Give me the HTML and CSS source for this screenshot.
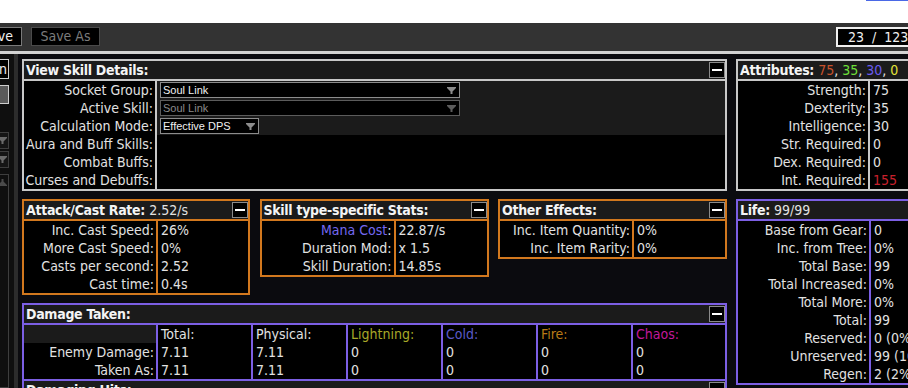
FILE: index.html
```html
<!DOCTYPE html>
<html>
<head>
    <title>Path of Building - Calcs</title>
    <link rel="stylesheet" href="styles.css">
</head>
<body>
    <div class="top-strip"><div class="focus-edge"></div></div>

    <!-- ツールバー -->
    <div class="toolbar">
        <button class="tb-btn tb-save">Save</button>
        <button class="tb-btn" disabled>Save As</button>
        <div class="counter">23  /  123</div>
    </div>

    <div class="workspace">
        <!-- 左サイドバー (切れている部分) -->
        <div class="sidebar">
            <button class="side-btn">Option</button>
            <div class="side-swatch"></div>
            <div class="side-select first">
                <svg width="9" height="7" viewBox="0 0 9 7"><polygon points="0,0 9,0 9,1 5.5,4.5 5.5,7 3.5,7 3.5,4.5 0,1" fill="#6a6a6a"/></svg>
            </div>
            <div class="side-select">
                <svg width="9" height="7" viewBox="0 0 9 7"><polygon points="0,0 9,0 9,1 5.5,4.5 5.5,7 3.5,7 3.5,4.5 0,1" fill="#6a6a6a"/></svg>
            </div>
            <div class="side-scroll">
                <svg width="9" height="7" viewBox="0 0 9 7"><polygon points="0,7 9,7 9,6 5.5,2.5 5.5,0 3.5,0 3.5,2.5 0,6" fill="#4a4a4a"/></svg>
            </div>
        </div>
        <div class="divider"></div>

        <div class="calcs">
            <div class="col-left">
                <!-- スキル詳細 -->
                <section class="panel grey">
                    <header class="panel-head">
                        <span class="title">View Skill Details:</span>
                        <span class="min-btn"></span>
                    </header>
                    <div class="grid lw131">
                        <div class="lbl">Socket Group:</div>
                        <div class="val shade">
                            <div class="dropdown wide">
                                <span>Soul Link</span>
                                <svg width="9" height="7" viewBox="0 0 9 7"><polygon points="0,0 9,0 9,1 5.5,4.5 5.5,7 3.5,7 3.5,4.5 0,1" fill="#8c8c8c"/></svg>
                            </div>
                        </div>
                        <div class="lbl">Active Skill:</div>
                        <div class="val shade">
                            <div class="dropdown wide disabled">
                                <span>Soul Link</span>
                                <svg width="9" height="7" viewBox="0 0 9 7"><polygon points="0,0 9,0 9,1 5.5,4.5 5.5,7 3.5,7 3.5,4.5 0,1" fill="#5c5c5c"/></svg>
                            </div>
                        </div>
                        <div class="lbl">Calculation Mode:</div>
                        <div class="val shade">
                            <div class="dropdown narrow">
                                <span>Effective DPS</span>
                                <svg width="9" height="7" viewBox="0 0 9 7"><polygon points="0,0 9,0 9,1 5.5,4.5 5.5,7 3.5,7 3.5,4.5 0,1" fill="#8c8c8c"/></svg>
                            </div>
                        </div>
                        <div class="lbl">Aura and Buff Skills:</div>
                        <div class="val"></div>
                        <div class="lbl">Combat Buffs:</div>
                        <div class="val"></div>
                        <div class="lbl">Curses and Debuffs:</div>
                        <div class="val"></div>
                    </div>
                </section>

                <div class="panel-row">
                    <section class="panel orange w228">
                        <header class="panel-head">
                            <span class="title">Attack/Cast Rate: <span class="head-val">2.52/s</span></span>
                            <span class="min-btn"></span>
                        </header>
                        <div class="grid">
                            <div class="lbl">Inc. Cast Speed:</div><div class="val">26%</div>
                            <div class="lbl">More Cast Speed:</div><div class="val">0%</div>
                            <div class="lbl">Casts per second:</div><div class="val">2.52</div>
                            <div class="lbl">Cast time:</div><div class="val">0.4s</div>
                        </div>
                    </section>

                    <section class="panel orange w229">
                        <header class="panel-head">
                            <span class="title">Skill type-specific Stats:</span>
                            <span class="min-btn"></span>
                        </header>
                        <div class="grid">
                            <div class="lbl"><span class="mana">Mana Cost</span>:</div><div class="val">22.87/s</div>
                            <div class="lbl">Duration Mod:</div><div class="val">x 1.5</div>
                            <div class="lbl">Skill Duration:</div><div class="val">14.85s</div>
                        </div>
                    </section>

                    <section class="panel orange w229">
                        <header class="panel-head">
                            <span class="title">Other Effects:</span>
                            <span class="min-btn"></span>
                        </header>
                        <div class="grid">
                            <div class="lbl">Inc. Item Quantity:</div><div class="val">0%</div>
                            <div class="lbl">Inc. Item Rarity:</div><div class="val">0%</div>
                        </div>
                    </section>
                </div>

                <div class="stack">
                    <section class="panel purple">
                        <header class="panel-head">
                            <span class="title">Damage Taken:</span>
                            <span class="min-btn"></span>
                        </header>
                        <div class="grid dmg-grid">
                            <div class="lbl shade"></div>
                            <div class="val">Total:</div>
                            <div class="val">Physical:</div>
                            <div class="val lightning">Lightning:</div>
                            <div class="val cold">Cold:</div>
                            <div class="val fire">Fire:</div>
                            <div class="val chaos">Chaos:</div>

                            <div class="lbl">Enemy Damage:</div>
                            <div class="val">7.11</div>
                            <div class="val">7.11</div>
                            <div class="val">0</div>
                            <div class="val">0</div>
                            <div class="val">0</div>
                            <div class="val">0</div>

                            <div class="lbl">Taken As:</div>
                            <div class="val">7.11</div>
                            <div class="val">7.11</div>
                            <div class="val">0</div>
                            <div class="val">0</div>
                            <div class="val">0</div>
                            <div class="val">0</div>
                        </div>
                    </section>
                    <section class="panel purple no-top">
                        <header class="panel-head">
                            <span class="title">Damaging Hits:</span>
                            <span class="min-btn"></span>
                        </header>
                    </section>
                </div>
            </div>

            <div class="col-right">
                <section class="panel grey">
                    <header class="panel-head">
                        <span class="title">Attributes: <span class="head-val"><span class="str">75</span>, <span class="dex">35</span>, <span class="int">30</span>, <span class="omni">0</span></span></span>
                    </header>
                    <div class="grid lw130">
                        <div class="lbl">Strength:</div><div class="val">75</div>
                        <div class="lbl">Dexterity:</div><div class="val">35</div>
                        <div class="lbl">Intelligence:</div><div class="val">30</div>
                        <div class="lbl">Str. Required:</div><div class="val">0</div>
                        <div class="lbl">Dex. Required:</div><div class="val">0</div>
                        <div class="lbl">Int. Required:</div><div class="val warn">155</div>
                    </div>
                </section>

                <section class="panel purple">
                    <header class="panel-head">
                        <span class="title">Life: <span class="head-val">99/99</span></span>
                    </header>
                    <div class="grid lw131">
                        <div class="lbl">Base from Gear:</div><div class="val">0</div>
                        <div class="lbl">Inc. from Tree:</div><div class="val">0%</div>
                        <div class="lbl">Total Base:</div><div class="val">99</div>
                        <div class="lbl">Total Increased:</div><div class="val">0%</div>
                        <div class="lbl">Total More:</div><div class="val">0%</div>
                        <div class="lbl">Total:</div><div class="val">99</div>
                        <div class="lbl">Reserved:</div><div class="val">0 (0%)</div>
                        <div class="lbl">Unreserved:</div><div class="val">99 (100%)</div>
                        <div class="lbl">Regen:</div><div class="val">2 (2%)</div>
                    </div>
                </section>
            </div>
        </div>
    </div>
</body>
</html>
```

FILE: styles.css
```css
html, body {
    margin: 0;
    padding: 0;
    height: 388px;
    overflow: hidden;
}
body {
    background-color: #fff;
    font-family: "DejaVu Sans Condensed", "Liberation Sans", sans-serif;
    font-size: 14px;
    color: #e2e2e2;
}

/* 上の白い帯 */
.top-strip {
    height: 23px;
    display: flex;
    justify-content: flex-end;
}
.focus-edge {
    width: 42px;
    height: 1px;
    background-color: #4a68e6;
}

/* ツールバー */
.toolbar {
    background-color: #333;
    border-bottom: 3px solid #d2d2d2;
    display: flex;
    align-items: flex-start;
    padding-top: 4px;
    box-sizing: border-box;
    height: 31px;
    gap: 9px;
}
.tb-btn {
    height: 19px;
    padding: 0;
    background-color: #000;
    border: 1px solid #7a7a7a;
    color: #f0f0f0;
    font-family: inherit;
    font-size: 14px;
    line-height: 17px;
    white-space: nowrap;
}
.tb-save {
    width: 60px;
    margin-left: -38px;
    text-align: right;
    padding-right: 8px;
}
.tb-btn[disabled] {
    width: 69px;
    color: #7c7c7c;
    border-color: #4a4a4a;
}
.counter {
    margin-left: auto;
    width: 72px;
    height: 20px;
    box-sizing: border-box;
    border: 2px solid #f0f0f0;
    border-right: none;
    background-color: #000;
    color: #f0f0f0;
    white-space: pre;
    overflow: hidden;
    padding-left: 10px;
    line-height: 16px;
}

/* 作業エリア */
.workspace {
    display: flex;
    height: 334px;
    background-color: #0b0b0f;
    overflow: hidden;
}
.sidebar {
    width: 14px;
    flex: none;
    display: flex;
    flex-direction: column;
    align-items: flex-end;
    background-color: #0f0f0f;
    overflow: hidden;
    padding-top: 5px;
}
.sidebar > * {
    margin-right: 5px;
    flex: none;
}
.side-btn {
    width: 60px;
    height: 20px;
    background-color: #000;
    border: 1px solid #cfcfcf;
    color: #f0f0f0;
    font-family: inherit;
    font-size: 14px;
    text-align: right;
    padding: 0 1px 0 0;
    line-height: 18px;
}
.side-swatch {
    width: 40px;
    height: 19px;
    margin-top: 6px;
    box-sizing: border-box;
    border: 1px solid #cfcfcf;
    background-color: #5a5a5a;
}
.side-select {
    width: 60px;
    height: 17px;
    box-sizing: border-box;
    border: 1px solid #3e3e3e;
    background-color: #151515;
    display: flex;
    align-items: center;
    justify-content: flex-end;
    padding-right: 1px;
    margin-top: 2px;
}
.side-select.first {
    margin-top: 28px;
}
.side-scroll {
    width: 60px;
    flex: 1;
    margin-top: 6px;
    box-sizing: border-box;
    border: 1px solid #3e3e3e;
    display: flex;
    justify-content: flex-end;
    align-items: flex-start;
    padding: 4px 1px 0 0;
}
.divider {
    width: 4px;
    flex: none;
    background-color: #2c2c2c;
}

.calcs {
    display: flex;
    gap: 9px;
    padding: 5px 0 0 4px;
}
.col-left {
    width: 705px;
    flex: none;
    display: flex;
    flex-direction: column;
    gap: 8px;
}
.col-right {
    width: 228px;
    flex: none;
    display: flex;
    flex-direction: column;
    gap: 8px;
}
.panel-row {
    display: flex;
    justify-content: space-between;
    align-items: flex-start;
}
.stack {
    display: flex;
    flex-direction: column;
}

/* パネル */
.panel {
    border: 2px solid var(--bc);
    background-color: #000;
}
.panel.grey { --bc: #c8c8c8; }
.panel.orange { --bc: #d2781e; }
.panel.purple { --bc: #7c5fe4; }
.panel.no-top { border-top: none; }
.w228 { width: 228px; box-sizing: border-box; }
.w229 { width: 229px; box-sizing: border-box; }

.panel-head {
    height: 18px;
    background-color: #1b1b1b;
    border-bottom: 2px solid var(--bc);
    display: flex;
    justify-content: space-between;
    align-items: flex-start;
    padding-left: 2px;
}
.title {
    font-weight: bold;
    color: #f4f4f4;
    line-height: 18px;
    white-space: nowrap;
    letter-spacing: -0.3px;
}
.head-val {
    font-weight: normal;
    color: #e2e2e2;
    letter-spacing: 0;
}
.min-btn {
    width: 16px;
    height: 16px;
    margin-top: 1px;
    box-sizing: border-box;
    border: 1px solid #8a8a8a;
    background-color: #000;
    display: flex;
    align-items: center;
    justify-content: center;
}
.min-btn::after {
    content: "";
    width: 10px;
    height: 2px;
    background-color: #fff;
}

.grid {
    display: grid;
    grid-template-columns: 132px 1fr;
    grid-auto-rows: 18px;
    column-gap: 2px;
    background-color: var(--bc);
}
.grid.lw131 { grid-template-columns: 131px 1fr; }
.grid.lw130 { grid-template-columns: 130px 1fr; }
.grid.dmg-grid { grid-template-columns: 132px repeat(5, 93px) 1fr; }
.grid > div {
    background-color: #000;
    line-height: 18px;
    white-space: nowrap;
    overflow: hidden;
}
.lbl {
    text-align: right;
    padding-right: 2px;
}
.val {
    padding-left: 3px;
}
.grid > .shade {
    background-color: #1b1b1b;
}

.dropdown {
    height: 16px;
    margin-top: 1px;
    box-sizing: border-box;
    border: 1px solid #8c8c8c;
    background-color: #000;
    display: flex;
    align-items: center;
    justify-content: space-between;
    padding: 0 3px 0 2px;
    font-family: "Liberation Sans", sans-serif;
    font-size: 11px;
    line-height: 14px;
    color: #f0f0f0;
}
.dropdown.wide { width: 300px; }
.dropdown.narrow { width: 99px; }
.dropdown.disabled {
    border-color: #5c5c5c;
    color: #8a8a8a;
}

/* 色 */
.mana { color: #7468f0; }
.str { color: #c8522c; }
.dex { color: #6ee03a; }
.int { color: #6a5cf0; }
.omni { color: #e4e43a; }
.warn { color: #c8202c; }
.lightning { color: #a8a828; }
.cold { color: #5a5ac8; }
.fire { color: #b87a16; }
.chaos { color: #c0189a; }
```
